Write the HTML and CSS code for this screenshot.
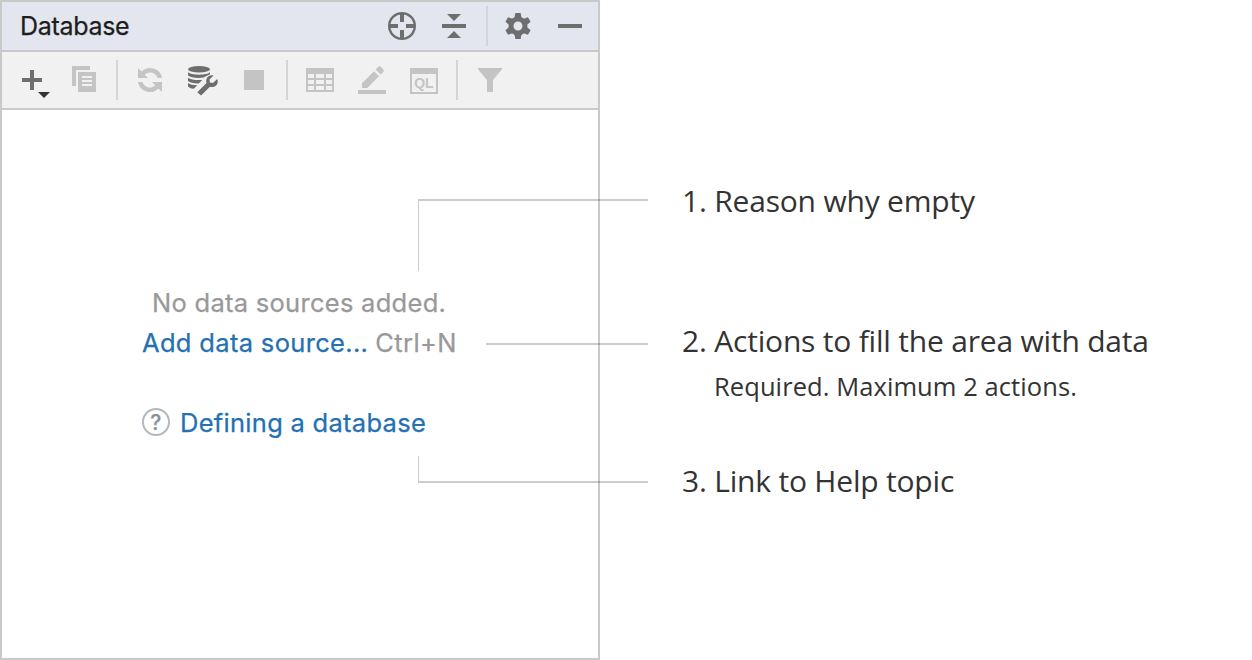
FILE: index.html
```html
<!DOCTYPE html>
<html lang="en">
<head>
<meta charset="utf-8">
<title>Database tool window</title>
<link rel="stylesheet" href="styles.css">
</head>
<body>
<main class="figure">
  <section class="panel">
    <header class="panel-header">
      <h1 class="panel-title">Database</h1>
      <div class="icons">
        <svg class="icon" viewBox="0 0 32 32"><circle cx="16" cy="16" r="12.8" fill="none" stroke="#6e6e6e" stroke-width="2.4"/><path d="M14 3h4v9h-4zM14 20h4v9h-4zM3 14h9v4H3zM20 14h9v4h-9z"/></svg>
        <svg class="icon" viewBox="0 0 32 32"><path d="M4 14h24v4H4zM9 4h14l-7 7zM9 28h14l-7-7z"/></svg>
        <span class="separator"></span>
        <svg class="icon" viewBox="0 0 32 32"><defs><path id="tooth" d="M13.4 3h5.2l1.2 6h-7.6z"/></defs><circle cx="16" cy="16" r="7" fill="none" stroke="#6e6e6e" stroke-width="5"/><use href="#tooth"/><use href="#tooth" transform="rotate(60 16 16)"/><use href="#tooth" transform="rotate(120 16 16)"/><use href="#tooth" transform="rotate(180 16 16)"/><use href="#tooth" transform="rotate(240 16 16)"/><use href="#tooth" transform="rotate(300 16 16)"/></svg>
        <svg class="icon" viewBox="0 0 32 32"><path d="M4 14h24v4H4z"/></svg>
      </div>
    </header>
    <div class="toolbar icons">
      <svg class="icon" viewBox="0 0 32 32"><path d="M14 6h4v8h8v4h-8v8h-4v-8H6v-4h8z"/><path fill="#333" d="M22 28h12l-6 6z"/></svg>
      <svg class="icon disabled" viewBox="0 0 32 32"><path d="M4 2h18v4H8v16H4z"/><path fill-rule="evenodd" d="M10 8h18v20H10zM14 12v2h10v-2zM14 16v2h10v-2zM14 20v2h10v-2z"/></svg>
      <span class="separator"></span>
      <svg class="icon disabled" viewBox="0 0 32 32"><path d="M4 4v10h10l-3.300-3.300A7.800 7.800 0 0 1 23.600 14H28A12 12 0 0 0 7.600 7.600zM28 28V18H18l3.300 3.300A7.800 7.800 0 0 1 8.400 18H4a12 12 0 0 0 20.400 6.400z"/></svg>
      <svg class="icon" viewBox="0 0 32 32"><ellipse cx="13" cy="5.200" rx="11" ry="3.200"/><path d="M2 8.300c3 3.200 19 3.200 22 0v2l-5.500 2.700-1 .6C12 14.500 4.500 13.800 2 11.500zM2 13.700c2.500 2 8.500 2.800 14.300 2.200l-3.600 3.500C8.500 19.600 4 18.800 2 17zM2 19.100c2 1.500 5.200 2.200 9.200 2.200L7.800 24.800C5.200 24.500 3 23.600 2 22.400z"/><path d="M11.300 28.200L20.500 19c-1.300-4.500 2-9 7-7.500l-4 4 .4 3.100 3 .4 4.300-4.100c2.300 5-2.500 9.200-7.200 7.900L15 31.500z"/></svg>
      <svg class="icon disabled" viewBox="0 0 32 32"><path d="M6 6h20v20H6z"/></svg>
      <span class="separator"></span>
      <svg class="icon disabled" viewBox="0 0 32 32"><path fill-rule="evenodd" d="M2 4h28v24H2zM4 10v4h6v-4zM12 10v4h8v-4zM22 10v4h6v-4zM4 16v4h6v-4zM12 16v4h8v-4zM22 16v4h6v-4zM4 22v4h6v-4zM12 22v4h8v-4zM22 22v4h6v-4z"/></svg>
      <svg class="icon disabled" viewBox="0 0 32 32"><path d="M2 26h28v4H2zM6 19.300L18 7.200l5 5L11.200 24H6zM19.600 5.500L22 3q1.500-1.300 3 0l2.200 2.200q1.300 1.400 0 2.800l-2.500 2.500z"/></svg>
      <svg class="icon disabled" viewBox="0 0 32 32"><path fill-rule="evenodd" d="M2 4h28v26H2zM4 10v18h24V10z"/><text x="6.200" y="24" class="ql">QL</text></svg>
      <span class="separator"></span>
      <svg class="icon disabled" viewBox="0 0 32 32"><path d="M4 4h24v1.300L19 16v12h-6V16L4 5.300z"/></svg>
    </div>
    <div class="empty-state">
      <p class="reason">No data sources added.</p>
      <p class="action"><a class="link add">Add data source...</a><span class="shortcut">Ctrl+N</span></p>
      <p class="help"><span class="help-icon">?</span><a class="link topic">Defining a database</a></p>
    </div>
  </section>
  <section class="notes">
    <p class="note">1. Reason why empty</p>
    <div>
      <p class="note">2. Actions to fill the area with data</p>
      <p class="detail">Required. Maximum 2 actions.</p>
    </div>
    <p class="note">3. Link to Help topic</p>
  </section>
  <svg class="connectors" viewBox="0 0 1252 660"><path d="M418 199h230v2H419v70h-1zM486 343h162v2H486zM418 456h1v25h229v2H418z"/></svg>
</main>
</body>
</html>
```
FILE: styles.css
```css
* { box-sizing: border-box; }
body { margin: 0; background: #fff; }
p, h1 { margin: 0; white-space: nowrap; font-weight: 400; }
.figure { position: relative; display: flex; width: 1252px; height: 660px; }
.panel {
  width: 600px;
  height: 660px;
  border: 2px solid #c9c9c9;
  font-family: Inter, "Liberation Sans", sans-serif;
  font-size: 25.5px;
  letter-spacing: 0.28px;
}
.panel-header {
  display: flex;
  justify-content: space-between;
  align-items: center;
  height: 50px;
  padding: 0 12px 0 18px;
  background: #e3e6ee;
  border-bottom: 2px solid #c9c9c9;
}
.panel-title { font-size: 25px; line-height: 48px; color: #1d1d1d; letter-spacing: -0.3px; -webkit-text-stroke: 0.25px; }
.icons { display: flex; align-items: center; gap: 20px; }
.icon { display: block; flex: none; width: 32px; height: 32px; overflow: visible; fill: #6e6e6e; }
.icon.disabled { fill: #c4c4c4; }
.separator { width: 2px; height: 40px; margin: 0 -4px; background: #d5d5d7; }
.panel-header .separator { margin-right: -6px; }
.toolbar { height: 58px; padding-left: 14px; background: #f1f1f1; border-bottom: 2px solid #c9c9c9; }
.ql { font: 700 14px "Liberation Sans", sans-serif; letter-spacing: 0; }
.empty-state { padding: 173px 0 0 140px; line-height: 40px; color: #999; -webkit-text-stroke: 0.25px; }
.reason { padding-left: 10px; }
.action { display: flex; gap: 7px; }
.shortcut { letter-spacing: 0.4px; }
.link { color: #2470b3; }
.add { letter-spacing: 0.33px; }
.help { display: flex; align-items: center; gap: 10px; margin-top: 40px; }
.help-icon {
  width: 28px;
  height: 28px;
  margin-top: -2px;
  border: 2px solid #afb9c0;
  border-radius: 50%;
  color: #87939a;
  font-size: 21px;
  font-weight: 500;
  line-height: 25px;
  text-align: center;
}
.notes {
  display: flex;
  flex-direction: column;
  padding: 181px 0 0 82px;
  gap: 60px;
  font-family: "Open Sans", "Noto Sans", sans-serif;
  color: #333;
}
.note { height: 40px; font-size: 30px; line-height: 40px; letter-spacing: -0.2px; }
.notes > .note:first-child { margin-bottom: 40px; }
.detail { height: 40px; padding: 5px 0 0 32px; font-size: 25.5px; line-height: 40px; letter-spacing: 0.08px; }
.connectors { position: absolute; inset: 0; width: 1252px; height: 660px; fill: rgba(0, 0, 0, 0.2); pointer-events: none; }
```
